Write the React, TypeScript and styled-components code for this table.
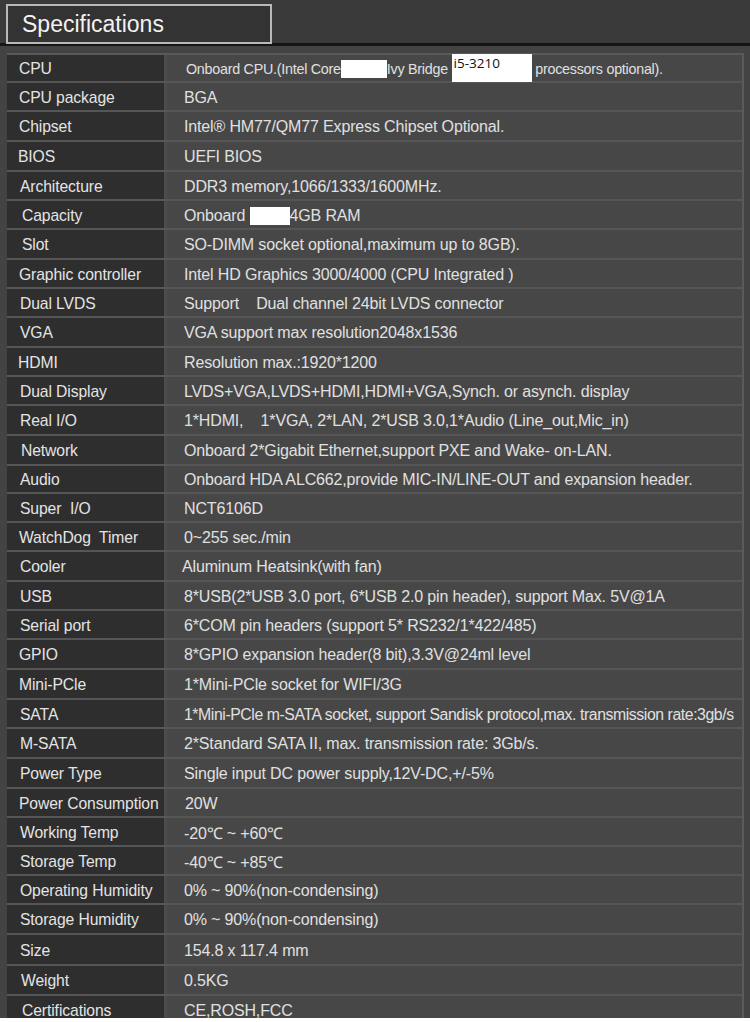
import React from "react";
import styled, { createGlobalStyle } from "styled-components";

const Global = createGlobalStyle`
  html, body { margin: 0; padding: 0; background: #ffffff; }
  body { font-family: "Liberation Sans", Arial, sans-serif; }
`;

const Page = styled.div`
  width: 750px;
  height: 1018px;
  overflow: hidden;
  background: #414141;
  display: flex;
  flex-direction: column;
`;

const Header = styled.header`
  height: 46px;
  background: #3a3a3a;
  padding: 4px 0 0 6px;
  box-sizing: border-box;
  border-bottom: 3px solid #151515;
`;

const TitleBox = styled.div`
  width: 266px;
  height: 40px;
  box-sizing: border-box;
  border: 2px solid #b9b9b9;
  background: #333333;
  color: #f2f2f2;
  font-size: 23px;
  line-height: 36px;
  padding-left: 14px;
`;

const Body = styled.div`
  padding: 7px 6px 0 7px;
  background: #434343;
  flex: 1;
`;

const Table = styled.div`
  border-top: 2px solid #595959;
  border-right: 2px solid #5a5a5a;
  display: flex;
  flex-direction: column;
`;

const Row = styled.div<{ $h: number }>`
  display: grid;
  grid-template-columns: 160px 1fr;
  grid-template-rows: 100%;
  height: ${(p) => p.$h}px;
  box-sizing: border-box;
  border-bottom: 2px solid #565656;
`;

const Label = styled.div<{ $indent: number }>`
  background: #2e2e2e;
  border-right: 3px solid #4c4c4c;
  color: #e4e4e4;
  font-size: 15.7px;
  display: flex;
  align-items: center;
  padding: 2px 0 0 ${(p) => 12 + p.$indent}px;
  white-space: pre;
  letter-spacing: -0.1px;
  min-height: 0;
`;

const Value = styled.div<{ $indent: number; $size: number; $spacing: number }>`
  background: #474747;
  color: #e0e0e0;
  font-size: ${(p) => p.$size}px;
  display: flex;
  align-items: center;
  padding: 2px 0 0 ${(p) => 17 + p.$indent}px;
  white-space: pre;
  letter-spacing: ${(p) => p.$spacing}px;
  min-height: 0;
`;

const Mask = styled.span<{ $w: number }>`
  display: inline-block;
  width: ${(p) => p.$w}px;
  height: 18px;
  vertical-align: middle;
  background: #ffffff;
`;

const ModelTag = styled.span`
  display: inline-block;
  position: relative;
  top: -6px;
  width: 80px;
  height: 18px;
  vertical-align: middle;
  background: #ffffff;
  box-shadow: 0 10px 0 #ffffff;
  color: #111111;
  font-family: "Open Sans", "DejaVu Sans", sans-serif;
  font-size: 13.5px;
  line-height: 18px;
  padding-left: 2px;
  box-sizing: border-box;
  letter-spacing: 0;
`;

type Spec = {
  label: string;
  value: React.ReactNode;
  h: number;
  li?: number;
  vi?: number;
  size?: number;
  ls?: number;
};

const specs: Spec[] = [
  {
    label: "CPU",
    h: 28,
    vi: 2,
    size: 14.3,
    ls: -0.25,
    value: (
      <>
        Onboard CPU.(Intel Core<Mask $w={46} />Ivy Bridge <ModelTag>i5-3210</ModelTag> processors optional).
      </>
    ),
  },
  { label: "CPU package", value: "BGA", h: 29 },
  { label: "Chipset", value: "Intel® HM77/QM77 Express Chipset Optional.", h: 30 },
  { label: "BIOS", value: "UEFI BIOS", h: 30, li: -1 },
  { label: "Architecture", value: "DDR3 memory,1066/1333/1600MHz.", h: 29, li: 1 },
  {
    label: "Capacity",
    h: 29,
    li: 3,
    value: (
      <>
        Onboard <Mask $w={40} />4GB RAM
      </>
    ),
  },
  { label: "Slot", value: "SO-DIMM socket optional,maximum up to 8GB).", h: 30, li: 3 },
  { label: "Graphic controller", value: "Intel HD Graphics 3000/4000 (CPU Integrated )", h: 29 },
  { label: "Dual LVDS", value: "Support    Dual channel 24bit LVDS connector", h: 29, li: 1 },
  { label: "VGA", value: "VGA support max resolution2048x1536", h: 30, li: 1 },
  { label: "HDMI", value: "Resolution max.:1920*1200", h: 29, li: -1 },
  { label: "Dual Display", value: "LVDS+VGA,LVDS+HDMI,HDMI+VGA,Synch. or asynch. display", h: 29, li: 1 },
  { label: "Real I/O", value: "1*HDMI,    1*VGA, 2*LAN, 2*USB 3.0,1*Audio (Line_out,Mic_in)", h: 30, li: 1 },
  { label: "Network", value: "Onboard 2*Gigabit Ethernet,support PXE and Wake- on-LAN.", h: 30, li: 2 },
  { label: "Audio", value: "Onboard HDA ALC662,provide MIC-IN/LINE-OUT and expansion header.", h: 28, li: 1 },
  { label: "Super  I/O", value: "NCT6106D", h: 29, li: 1 },
  { label: "WatchDog  Timer", value: "0~255 sec./min", h: 29 },
  { label: "Cooler", value: "Aluminum Heatsink(with fan)", h: 30, li: 1, vi: -2 },
  { label: "USB", value: "8*USB(2*USB 3.0 port, 6*USB 2.0 pin header), support Max. 5V@1A", h: 29, li: 1 },
  { label: "Serial port", value: "6*COM pin headers (support 5* RS232/1*422/485)", h: 29, li: 1 },
  { label: "GPIO", value: "8*GPIO expansion header(8 bit),3.3V@24ml level", h: 30 },
  { label: "Mini-PCle", value: "1*Mini-PCle socket for WIFI/3G", h: 30 },
  {
    label: "SATA",
    value: "1*Mini-PCle m-SATA socket, support Sandisk protocol,max. transmission rate:3gb/s",
    h: 29,
    li: 1,
    size: 15.8,
    ls: -0.42,
  },
  { label: "M-SATA", value: "2*Standard SATA II, max. transmission rate: 3Gb/s.", h: 30, li: 1 },
  { label: "Power Type", value: "Single input DC power supply,12V-DC,+/-5%", h: 30, li: 1 },
  { label: "Power Consumption", value: "20W", h: 29, vi: 1 },
  { label: "Working Temp", value: "-20℃ ~ +60℃", h: 29, li: 1 },
  { label: "Storage Temp", value: "-40℃ ~ +85℃", h: 29, li: 1 },
  { label: "Operating Humidity", value: "0% ~ 90%(non-condensing)", h: 29, li: 1 },
  { label: "Storage Humidity", value: "0% ~ 90%(non-condensing)", h: 30, li: 1 },
  { label: "Size", value: "154.8 x 117.4 mm", h: 31, li: 1 },
  { label: "Weight", value: "0.5KG", h: 30, li: 2 },
  { label: "Certifications", value: "CE,ROSH,FCC", h: 29, li: 3 },
];

export default function App() {
  return (
    <>
      <Global />
      <Page>
        <Header>
          <TitleBox>Specifications</TitleBox>
        </Header>
        <Body>
          <Table>
            {specs.map((s, i) => (
              <Row key={i} $h={s.h}>
                <Label $indent={s.li ?? 0}>{s.label}</Label>
                <Value $indent={s.vi ?? 0} $size={s.size ?? 16} $spacing={s.ls ?? -0.15}>
                  {s.value}
                </Value>
              </Row>
            ))}
          </Table>
        </Body>
      </Page>
    </>
  );
}
